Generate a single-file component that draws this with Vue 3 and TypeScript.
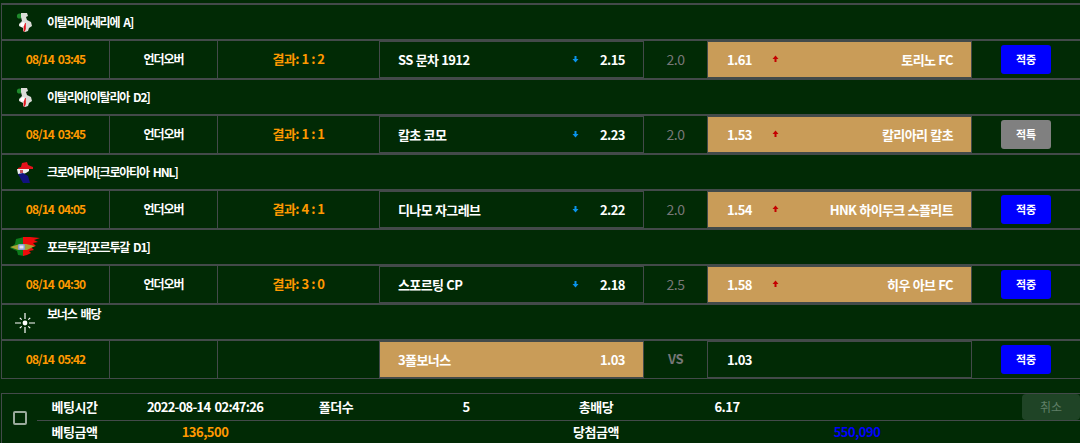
<script setup lang="ts">
type Game = {
  league: string
  flag: 'italy' | 'croatia' | 'portugal'
  time: string
  result: string
  home: string
  homeOdds: string
  line: string
  awayOdds: string
  away: string
  status: string
}

const games: Game[] = [
  { league: '이탈리아[세리에 A]', flag: 'italy', time: '08/14 03:45', result: '결과: 1 : 2', home: 'SS 문차 1912', homeOdds: '2.15', line: '2.0', awayOdds: '1.61', away: '토리노 FC', status: '적중' },
  { league: '이탈리아[이탈리아 D2]', flag: 'italy', time: '08/14 03:45', result: '결과: 1 : 1', home: '칼초 코모', homeOdds: '2.23', line: '2.0', awayOdds: '1.53', away: '칼리아리 칼초', status: '적특' },
  { league: '크로아티아[크로아티아 HNL]', flag: 'croatia', time: '08/14 04:05', result: '결과: 4 : 1', home: '디나모 자그레브', homeOdds: '2.22', line: '2.0', awayOdds: '1.54', away: 'HNK 하이두크 스플리트', status: '적중' },
  { league: '포르투갈[포르투갈 D1]', flag: 'portugal', time: '08/14 04:30', result: '결과: 3 : 0', home: '스포르팅 CP', homeOdds: '2.18', line: '2.5', awayOdds: '1.58', away: '히우 아브 FC', status: '적중' }
]
</script>

<template>
  <div class="slip">
    <template v-for="game in games" :key="game.league">
      <div class="league">
        <span class="league-icon">
          <svg v-if="game.flag === 'italy'" width="20" height="22" viewBox="0 0 20 22">
            <circle cx="4.500" cy="5" r="2.600" fill="#1f8a2c" />
            <path d="M6 2h6l1 3-2 1 1 3 4 2 1 4-3 2-1 3-3 1-2-1v-3l-2-1-2-1 0-2 3-3-1-4z" fill="#dcdcd8" />
            <path d="M9 12h1.800v6l-1 2.500H8.500z" fill="#e3141c" />
            <path d="M5 13l3-2 2 1-1 3-3 1z" fill="#fff" />
          </svg>
          <svg v-else-if="game.flag === 'croatia'" width="20" height="22" viewBox="0 0 20 22">
            <path d="M3 7l3-1 1-4 5-1 1 3 5 2v2H3z" fill="#e3121c" />
            <path d="M2 8h12v2l-3 2-3 1H3z" fill="#eee" />
            <path d="M5 9h3v3H5z" fill="#c9505a" />
            <path d="M3 13l5-1 5 3 2 7H8z" fill="#12127e" />
          </svg>
          <svg v-else-if="game.flag === 'portugal'" width="32" height="22" viewBox="0 0 32 22">
            <path d="M7 3l8-2v19l-6-1-1-4-7-3 5-4z" fill="#0d7a1c" />
            <path d="M14 1h7l10 1-6 2 4 2-5 1 3 3-5 1 3 3-5 1 2 2-4 2-4 1z" fill="#ef0a0a" />
            <path d="M1 11l10-3h6l9 2-8 4H9z" fill="#a8a235" />
            <rect x="9" y="8" width="7" height="6" rx="1.500" fill="#8d9fd2" />
            <rect x="10.500" y="9.500" width="4" height="3" fill="#e3e3ee" />
          </svg>
        </span>
        <span class="league-name">{{ game.league }}</span>
      </div>
      <div class="row">
        <div class="cell time">{{ game.time }}</div>
        <div class="cell kind">언더오버</div>
        <div class="cell result">{{ game.result }}</div>
        <div class="pick">
          <span class="team">{{ game.home }}</span>
          <svg class="arrow" width="7" height="8" viewBox="0 0 7 8"><path d="M2.500 1h2v3H6.500L3.500 7.500.5 4h2z" fill="#0a94ec" /></svg>
          <span class="odds">{{ game.homeOdds }}</span>
        </div>
        <div class="cell line">{{ game.line }}</div>
        <div class="pick active">
          <span class="odds odds-away">{{ game.awayOdds }}</span>
          <svg class="arrow" width="7" height="8" viewBox="0 0 7 8"><path d="M2.500 7h2V4H6.500L3.500.5.5 4h2z" fill="#c40000" /></svg>
          <span class="team team-away">{{ game.away }}</span>
        </div>
        <div class="cell status">
          <span class="badge" :class="{ void: game.status === '적특' }">{{ game.status }}</span>
        </div>
      </div>
    </template>

    <div class="league bonus">
      <span class="league-icon">
        <svg width="20" height="20" viewBox="0 0 20 20" fill="none" stroke="#fff" stroke-width="1.200">
          <circle cx="10" cy="10" r="2.400" fill="#fff" stroke="none" />
          <path d="M10 0v6M10 14v6M0 10h6M14 10h6M4.800 4.800l1.900 1.900M13.300 13.300l1.900 1.900M15.200 4.800l-1.900 1.900M6.700 13.300l-1.900 1.900" />
        </svg>
      </span>
      <span class="league-name">보너스 배당</span>
    </div>
    <div class="row row-last">
      <div class="cell time">08/14 05:42</div>
      <div class="cell kind"></div>
      <div class="cell result"></div>
      <div class="pick active">
        <span class="team">3폴보너스</span>
        <span class="odds">1.03</span>
      </div>
      <div class="cell line vs">VS</div>
      <div class="pick">
        <span class="odds odds-away">1.03</span>
      </div>
      <div class="cell status">
        <span class="badge">적중</span>
      </div>
    </div>

    <div class="summary">
      <div class="check-col"><span class="check"></span></div>
      <div class="summary-grid">
        <span class="s-cell">베팅시간</span>
        <span class="s-cell s-date">2022-08-14 02:47:26</span>
        <span class="s-cell">폴더수</span>
        <span class="s-cell">5</span>
        <span class="s-cell">총배당</span>
        <span class="s-cell">6.17</span>
        <span class="s-cell s-action"><button class="cancel" type="button" disabled>취소</button></span>
        <span class="s-cell s-low">베팅금액</span>
        <span class="s-cell s-low amount">136,500</span>
        <span class="s-cell s-low"></span>
        <span class="s-cell s-low"></span>
        <span class="s-cell s-low">당첨금액</span>
        <span class="s-cell s-low payout">550,090</span>
      </div>
    </div>
  </div>
</template>

<style scoped>
.slip {
  width: 1080px;
  height: 443px;
  overflow: hidden;
  box-sizing: border-box;
  padding: 3px 0 0 1px;
  background: #012a05;
  color: #fff;
  font-family: "Noto Sans CJK KR", "Noto Sans", sans-serif;
  font-size: 11px;
  font-weight: 700;
}

.league {
  display: flex;
  align-items: center;
  height: 34px;
  border-top: 2px solid #434a4a;
  border-left: 1px solid #434a4a;
}

.league-icon {
  display: flex;
  justify-content: center;
  width: 45px;
  flex: none;
}

.league-name {
  font-size: 12px;
  letter-spacing: -1.2px;
  word-spacing: 2.500px;
  padding-bottom: 2px;
}

.bonus {
  align-items: flex-start;
}

.bonus .league-icon {
  margin-top: 8px;
}

.bonus .league-name {
  padding-bottom: 0;
}

.row {
  display: grid;
  grid-template-columns: 107px 108px 162px 264px 64px 264px 1fr;
  height: 37px;
  border-top: 2px solid #434a4a;
  border-left: 1px solid #434a4a;
}

.row-last {
  border-bottom: 1px solid #434a4a;
}

.cell {
  display: flex;
  align-items: center;
  justify-content: center;
  border-left: 1px solid #434a4a;
  padding-bottom: 2px;
}

.time {
  border-left: 0;
  color: #f90;
  font-size: 12px;
  letter-spacing: -0.95px;
  word-spacing: 2px;
}

.kind {
  font-size: 12px;
  letter-spacing: -1.1px;
}

.result {
  color: #f90;
  font-size: 13px;
  letter-spacing: -0.5px;
}

.line {
  color: #777;
  font-size: 14px;
  font-weight: 400;
  letter-spacing: -0.4px;
}

.vs {
  font-weight: 700;
  font-size: 13px;
}

.pick {
  display: flex;
  align-items: center;
  box-sizing: border-box;
  height: 37px;
  padding: 0 18px 1px;
  border: 1px solid #434a4a;
  border-right: 0;
  font-size: 13px;
  letter-spacing: -0.6px;
  word-spacing: 0.500px;
}

.pick.active {
  background: #c99c58;
}

.team {
  flex: 1;
}

.team-away {
  text-align: right;
}

.arrow {
  flex: none;
}

.odds {
  width: 25px;
  text-align: left;
}

.pick > .arrow + .odds {
  margin-left: 21px;
}

.odds-away {
  flex: none;
  margin-left: 1px;
}

.odds-away + .arrow {
  margin-left: 20px;
}

.status {
  padding-bottom: 0;
}

.badge {
  display: flex;
  align-items: center;
  justify-content: center;
  width: 50px;
  height: 29px;
  border-radius: 3px;
  background: #00f;
  padding-bottom: 1px;
  box-sizing: border-box;
}

.badge.void {
  background: #808080;
}

.summary {
  display: flex;
  margin-top: 14px;
  border-top: 1px solid #434a4a;
  border-left: 1px solid #434a4a;
  height: 60px;
}

.check-col {
  flex: none;
  width: 35px;
  padding: 17px 0 0 11px;
  box-sizing: border-box;
}

.check {
  display: block;
  box-sizing: border-box;
  width: 14px;
  height: 14px;
  border: 2px solid #9aaa9c;
  border-radius: 2px;
}

.summary-grid {
  flex: 1;
  display: grid;
  grid-template-columns: 75px 186px 76px 184px 76px 186px 1fr;
  grid-template-rows: 26px 1fr;
  font-size: 13px;
  letter-spacing: -0.5px;
}

.s-cell {
  display: flex;
  align-items: center;
  justify-content: center;
  padding-bottom: 1px;
}

.s-date {
  letter-spacing: -0.75px;
  word-spacing: 2px;
}

.s-action {
  justify-content: flex-end;
  padding-bottom: 0;
}

.s-low {
  border-top: 1px solid #434a4a;
  height: 23px;
  box-sizing: border-box;
  padding-bottom: 2px;
}

.amount {
  color: #f90;
}

.payout {
  grid-column: 6 / 8;
  color: #00f;
}

.cancel {
  width: 58px;
  height: 26px;
  padding: 0 0 2px;
  border: 0;
  border-radius: 4px;
  background: #1f4426;
  color: #5f7f66;
  font: inherit;
  font-size: 12px;
  font-weight: 400;
}
</style>
